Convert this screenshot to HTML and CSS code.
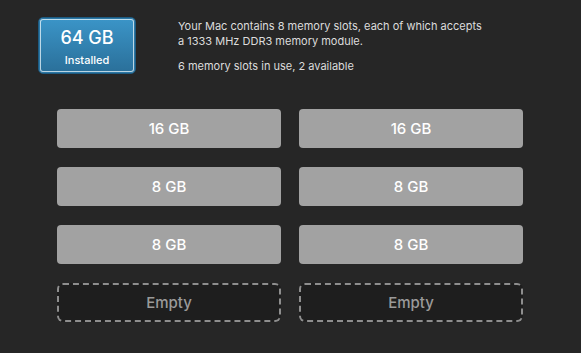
FILE: index.html
```html
<!DOCTYPE html>
<html lang="en">
<head>
  <meta charset="UTF-8">
  <title>Memory</title>
  <link rel="stylesheet" href="styles.css">
</head>
<body>
  <div class="memory">
    <div class="summary">
      <div class="badge">
        <div class="badge-size">64 GB</div>
        <div class="badge-label">Installed</div>
      </div>
      <div class="info">
        <p>Your Mac contains 8 memory slots, each of which accepts<br>a 1333 MHz DDR3 memory module.</p>
        <p>6 memory slots in use, 2 available</p>
      </div>
    </div>

    <div class="slots">
      <div class="slot">16 GB</div>
      <div class="slot">16 GB</div>
      <div class="slot">8 GB</div>
      <div class="slot">8 GB</div>
      <div class="slot">8 GB</div>
      <div class="slot">8 GB</div>
      <div class="slot empty">Empty</div>
      <div class="slot empty">Empty</div>
    </div>
  </div>
</body>
</html>
```

FILE: styles.css
```css
body {
  margin: 0;
  background-color: #262626;
  font-family: Inter, "Noto Sans", sans-serif;
  color: #dcdcdc;
}
.memory {
  padding: 17px 0 0 0;
}
.summary {
  display: flex;
  align-items: flex-start;
  height: 57px;
  padding-left: 38px;
  gap: 42px;
}
.badge {
  width: 98px;
  height: 57px;
  box-sizing: border-box;
  border: 1px solid #1d5a80;
  border-radius: 5px;
  background: linear-gradient(#3b95c8, #2a6f99);
  box-shadow: inset 0 0 0 1px #2c77a4, inset 0 0 0 2px rgba(235, 245, 250, 0.75);
  color: #fff;
  text-align: center;
}
.badge-size {
  font-size: 18px;
  font-weight: 500;
  margin-top: 10px;
  line-height: 20px;
}
.badge-label {
  font-size: 11px;
  font-weight: 500;
  line-height: 14px;
  margin-top: 5px;
}
.info {
  margin-top: 2px;
  font-size: 11px;
  line-height: 15px;
}
.info p {
  margin: 0 0 10px;
}
.slots {
  display: grid;
  grid-template-columns: 224px 224px;
  grid-auto-rows: 39px;
  column-gap: 18px;
  row-gap: 19px;
  margin: 35px 0 0 57px;
}
.slot {
  display: flex;
  align-items: center;
  justify-content: center;
  background-color: #a2a2a2;
  border-radius: 4px;
  color: #fff;
  font-size: 15px;
  font-weight: 500;
}
.slot.empty {
  background-color: #1e1e1e;
  border: 2px dashed #8e8e8e;
  color: #9a9a9a;
  box-sizing: border-box;
  border-radius: 6px;
}
```
